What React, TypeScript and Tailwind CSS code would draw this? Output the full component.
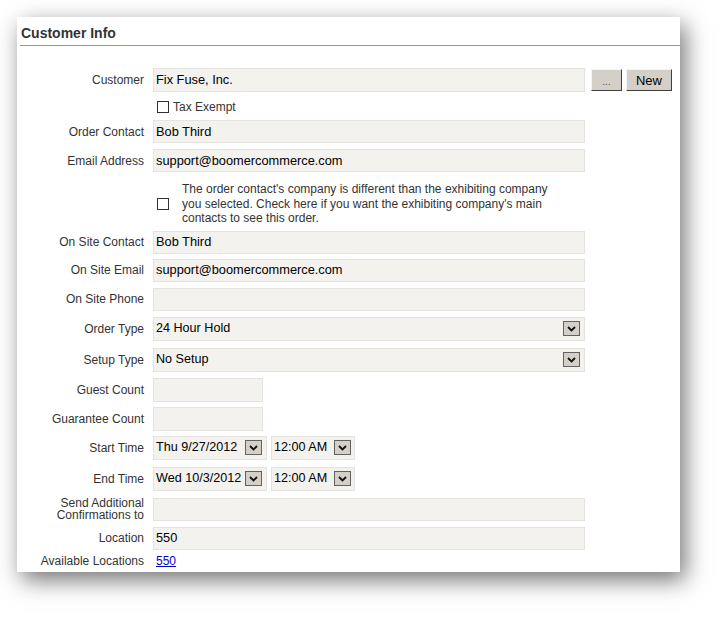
import React from "react";

const font = { fontFamily: '"Liberation Sans", Arial, sans-serif' };

function Chevron() {
  return (
    <span className="flex h-[15px] w-[17px] shrink-0 items-center justify-center border border-[#626262] bg-[#d4d0c8]">
      <svg width="9" height="6" viewBox="0 0 9 6">
        <path d="M1 1 L4.5 4.5 L8 1" fill="none" stroke="#111" strokeWidth="1.8" />
      </svg>
    </span>
  );
}

function Label({ children }: { children: React.ReactNode }) {
  return (
    <div className="w-[127px] shrink-0 text-right text-[12px] leading-[14px] text-[#333]">{children}</div>
  );
}

function Field({ value, w = "w-[432px]", h = "h-[23px]" }: { value?: string; w?: string; h?: string }) {
  return (
    <div className={`${w} ${h} flex items-center border border-[#e4e3de] bg-[#f3f2ee] pl-[2px] text-[12.8px] text-black`}>
      {value}
    </div>
  );
}

function Select({ value, w, h = "h-[24px]", pr = "pr-[4px]" }: { value: string; w: string; h?: string; pr?: string }) {
  return (
    <div className={`${w} ${h} ${pr} flex items-center justify-between border border-[#e4e3de] bg-[#f3f2ee] pl-[2px] text-[12.6px] text-black`}>
      <span className="whitespace-nowrap">{value}</span>
      <Chevron />
    </div>
  );
}

function Row({ mt, children, extra = "" }: { mt: string; children: React.ReactNode; extra?: string }) {
  return <div className={`flex items-center gap-[9px] ${mt} ${extra}`}>{children}</div>;
}

export default function App() {
  return (
    <div className="h-[620px] w-[728px] overflow-hidden bg-white pl-[17px] pt-[17px]" style={font}>
      <div className="h-[555px] w-[663px] bg-white shadow-[5px_8px_22px_rgba(0,0,0,0.55)]">
        <div className="ml-[3px] h-[29px] border-b border-[#999] pl-[1px] pt-[8px] text-[14px] font-bold leading-[16px] text-[#333]">
          Customer Info
        </div>
        <div className="flex flex-col">
          <Row mt="mt-[22px]">
            <Label>Customer</Label>
            <div className="flex items-center">
              <Field value="Fix Fuse, Inc." h="h-[24px]" />
              <button className="ml-[6px] h-[22px] w-[31px] border border-t-[#f4f4f4] border-l-[#f4f4f4] border-r-[#404040] border-b-[#404040] bg-[#d4d0c8] pt-[4px] text-[10px] leading-none text-[#555]">
                ...
              </button>
              <button className="ml-[4px] h-[22px] w-[46px] border border-t-[#f4f4f4] border-l-[#f4f4f4] border-r-[#404040] border-b-[#404040] bg-[#d4d0c8] text-[13px] leading-none text-black">
                New
              </button>
            </div>
          </Row>
          <div className="mt-[8px] flex h-[14px] items-center pl-[140px] text-[12px] text-[#333]">
            <span className="mr-[4px] h-[12px] w-[12px] border border-[#333] bg-white" />
            Tax Exempt
          </div>
          <Row mt="mt-[6px]">
            <Label>Order Contact</Label>
            <Field value="Bob Third" />
          </Row>
          <Row mt="mt-[6px]">
            <Label>Email Address</Label>
            <Field value="support@boomercommerce.com" />
          </Row>
          <div className="mt-[10px] flex items-center pl-[140px]">
            <span className="h-[12px] w-[12px] shrink-0 border border-[#333] bg-white" />
            <p className="ml-[13px] w-[380px] text-[12px] leading-[14.5px] text-[#333]">
              The order contact's company is different than the exhibiting company you selected. Check here if you want the exhibiting company's main contacts to see this order.
            </p>
          </div>
          <Row mt="mt-[5px]">
            <Label>On Site Contact</Label>
            <Field value="Bob Third" />
          </Row>
          <Row mt="mt-[5px]">
            <Label>On Site Email</Label>
            <Field value="support@boomercommerce.com" />
          </Row>
          <Row mt="mt-[6px]">
            <Label>On Site Phone</Label>
            <Field />
          </Row>
          <Row mt="mt-[6px]">
            <Label>Order Type</Label>
            <Select value="24 Hour Hold" w="w-[432px]" />
          </Row>
          <Row mt="mt-[7px]">
            <Label>Setup Type</Label>
            <Select value="No Setup" w="w-[432px]" />
          </Row>
          <Row mt="mt-[6px]">
            <Label>Guest Count</Label>
            <Field w="w-[110px]" h="h-[24px]" />
          </Row>
          <Row mt="mt-[5px]">
            <Label>Guarantee Count</Label>
            <Field w="w-[110px]" h="h-[24px]" />
          </Row>
          <Row mt="mt-[5px]">
            <Label>Start Time</Label>
            <div className="flex items-center gap-[4px]">
              <Select value="Thu 9/27/2012" w="w-[114px]" pr="pr-[4px]" />
              <Select value="12:00 AM" w="w-[84px]" pr="pr-[3px]" />
            </div>
          </Row>
          <Row mt="mt-[7px]">
            <Label>End Time</Label>
            <div className="flex items-center gap-[4px]">
              <Select value="Wed 10/3/2012" w="w-[114px]" pr="pr-[4px]" />
              <Select value="12:00 AM" w="w-[84px]" pr="pr-[3px]" />
            </div>
          </Row>
          <Row mt="mt-[7px]" extra="h-[23px]">
            <div className="w-[127px] shrink-0 text-right text-[12px] leading-[12.5px] text-[#333]">
              Send Additional
              <br />
              Confirmations to
            </div>
            <Field />
          </Row>
          <Row mt="mt-[6px]">
            <Label>Location</Label>
            <Field value="550" />
          </Row>
          <Row mt="mt-[4px]">
            <Label>Available Locations</Label>
            <a href="#" className="pl-[3px] text-[12px] leading-[14px] text-[#0000cc] underline">
              550
            </a>
          </Row>
        </div>
      </div>
    </div>
  );
}
